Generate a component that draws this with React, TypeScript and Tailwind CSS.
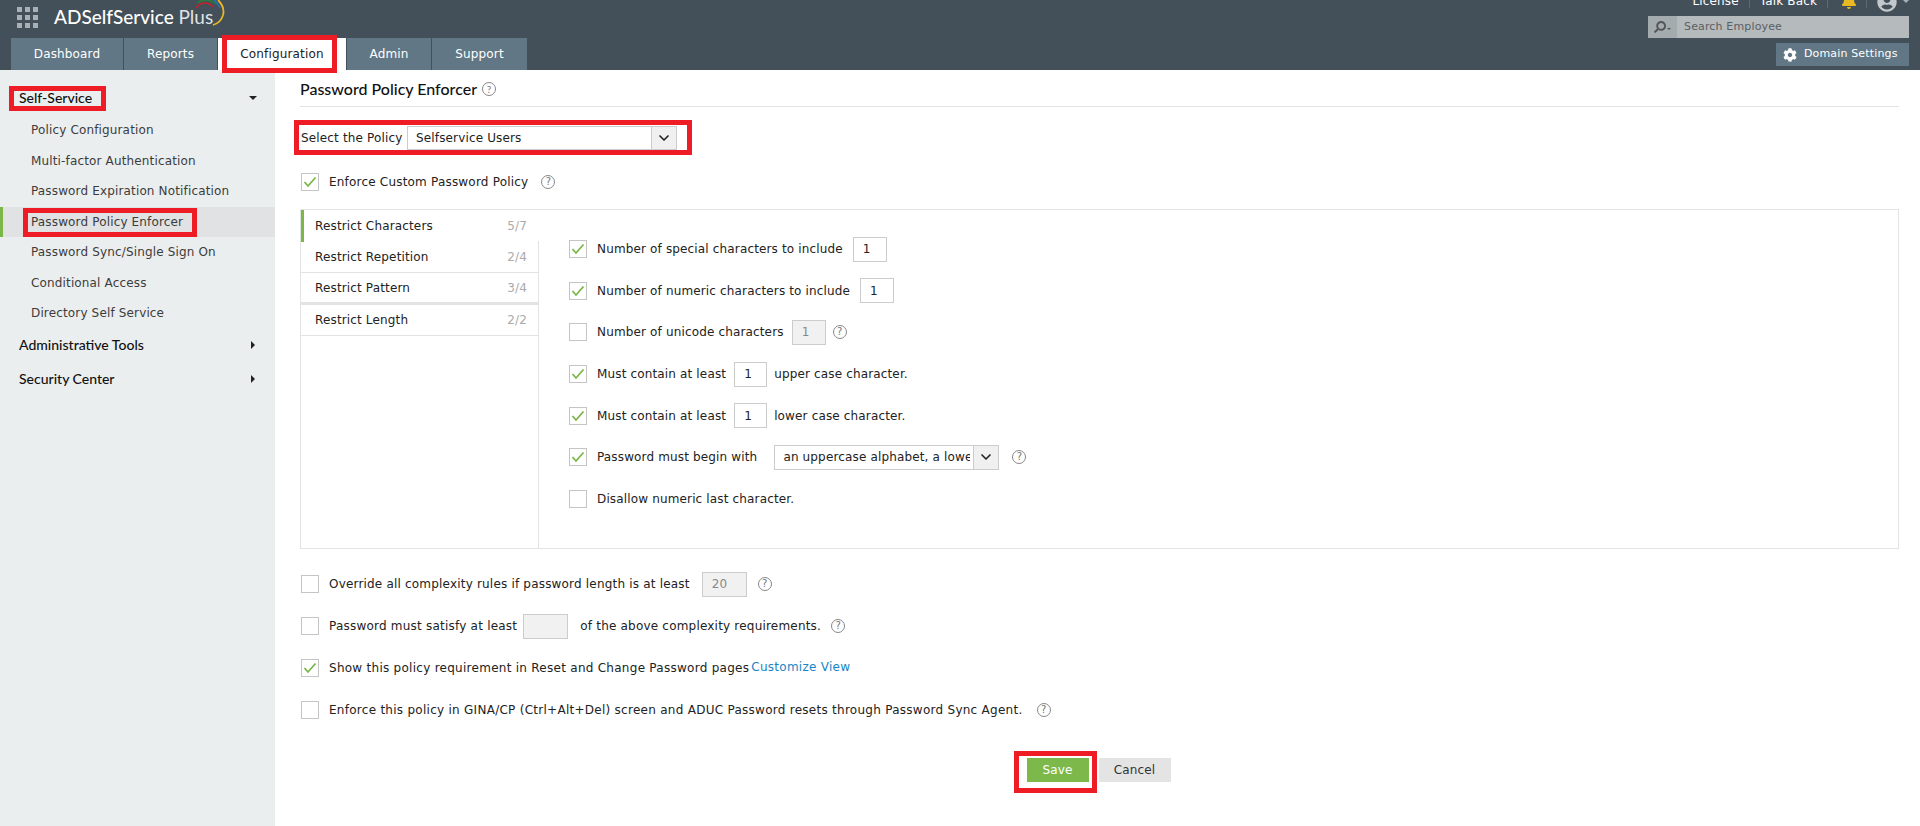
import { ChevronDown } from "lucide-react";
import { FaBell, FaCog, FaSearch, FaUserCircle } from "react-icons/fa";

const verdana = "font-['DejaVu_Sans',sans-serif]";
const lato = "font-['Lato',sans-serif] tracking-normal";

function Help({ className = "" }: { className?: string }) {
  return (
    <span className={`inline-flex h-[14px] w-[14px] shrink-0 items-center justify-center rounded-full border border-[#888] text-[10px] leading-none tracking-normal text-[#777] ${className}`}>?</span>
  );
}

function Check({ on }: { on?: boolean }) {
  return (
    <span className="flex h-[18px] w-[18px] shrink-0 items-center justify-center border border-[#c4c4c4] bg-white">
      {on && (
        <svg width="14" height="12" viewBox="0 0 14 12" fill="none">
          <path d="M1.5 6 L5 10 L12.5 1.5" stroke="#7ab648" strokeWidth="1.8" />
        </svg>
      )}
    </span>
  );
}

function NumBox({ value, w = "w-[34px]", off }: { value: string; w?: string; off?: boolean }) {
  return (
    <span className={`flex h-[25px] items-center border border-[#ccc] pl-[9px] ${w} ${off ? "bg-[#f1f1f1] text-[#888]" : "bg-white"}`}>{value}</span>
  );
}

function Row({ on, h = "h-[41.6px]", children }: { on?: boolean; h?: string; children: React.ReactNode }) {
  return (
    <div className={`flex items-center ${h}`}>
      <Check on={on} />
      <div className="ml-[10px] flex items-center">{children}</div>
    </div>
  );
}

const tabs = ["Dashboard", "Reports", "Configuration", "Admin", "Support"];
const tabWidths = ["w-[112px]", "w-[93px]", "w-[128px]", "w-[84px]", "w-[95px]"];
const subItems = ["Policy Configuration", "Multi-factor Authentication", "Password Expiration Notification", "Password Policy Enforcer", "Password Sync/Single Sign On", "Conditional Access", "Directory Self Service"];
const restricts = [["Restrict Characters", "5/7"], ["Restrict Repetition", "2/4"], ["Restrict Pattern", "3/4"], ["Restrict Length", "2/2"]];

export default function App() {
  return (
    <div className={`h-[826px] w-[1920px] overflow-hidden bg-white text-[12px] tracking-[0.15px] text-[#222] ${verdana}`}>
      {/* header */}
      <header className="relative flex h-[70px] justify-between bg-[#434f59]">
        <div className="flex flex-col pl-[11px]">
          <div className="flex h-[38px] items-start">
            <div className="ml-[6px] mt-[7px] grid grid-cols-3 gap-[3px]">
              {Array.from({ length: 9 }).map((_, i) => (
                <span key={i} className="h-[5px] w-[5px] bg-[#a9b0b5]" />
              ))}
            </div>
            <span className={`ml-[16px] mt-[6px] text-[19px] font-medium leading-[22px] text-white ${lato}`}>ADSelfService <span className="font-normal text-[#dfe3e5]">Plus</span></span>
          </div>
          <svg width="40" height="30" viewBox="0 0 40 30" fill="none" className="absolute left-[190px] top-0">
            <path d="M6 8 C10 2 18 1 23 7" stroke="#c8202f" strokeWidth="1.6" />
            <path d="M7 3 C12 -1 20 -1 27 4" stroke="#2a7a3c" strokeWidth="1.6" />
            <path d="M24 0 C27 2 29 5 30 8" stroke="#2c6bb5" strokeWidth="1.6" />
            <path d="M28 0 C38 10 33 22 23 25" stroke="#e8b923" strokeWidth="1.8" />
          </svg>
          <nav className="flex h-[32px] gap-[1px]">
            {tabs.map((t, i) => (
              <div key={t} className={`relative flex items-center justify-center ${tabWidths[i]} ${t === "Configuration" ? "bg-white text-[#222]" : "bg-[#627785] text-white"}`}>
                {t}
                {t === "Configuration" && <span className="absolute -bottom-[3px] -top-[3px] left-[4px] right-[9px] border-[5px] border-[#ee1c25]" />}
              </div>
            ))}
          </nav>
        </div>
        <div className="flex flex-col items-end pr-[11px]">
          <div className="-mt-[7px] flex h-[16px] items-center text-white">
            <span>License</span>
            <span className="mx-[10px] h-[14px] w-px bg-[#5d6a73]" />
            <span>Talk Back</span>
            <span className="mx-[10px] h-[14px] w-px bg-[#5d6a73]" />
            <span className="relative ml-[3px]">
              <FaBell size={16} color="#e8b923" />
              <span className="absolute -right-[5px] -top-[1px] h-[8px] w-[11px] rounded-full bg-[#e53935]" />
            </span>
            <span className="ml-[9px] mr-[10px] h-[14px] w-px bg-[#5d6a73]" />
            <FaUserCircle size={20} color="#c2c8cc" className="mt-[2px]" />
            <span className="ml-[5px] mr-[-1px] h-0 w-0 border-x-[4px] border-t-[4px] border-x-transparent border-t-[#a9b0b5]" />
          </div>
          <div className="mt-[7px] flex h-[22px] w-[261px] items-center bg-[#b5babd] text-[11px] text-[#5b5f62]">
            <span className="flex h-full w-[29px] items-center justify-center gap-[1px] bg-[#a3abaf]">
              <FaSearch size={12} color="#555" className="-scale-x-100" />
              <span className="mt-[3px] h-0 w-0 border-x-[2px] border-t-[2px] border-x-transparent border-t-[#555]" />
            </span>
            <span className="ml-[7px]">Search Employee</span>
          </div>
          <div className="mt-[5px] flex h-[23px] w-[133px] items-center bg-[#627785] pl-[7px] text-[11px] text-white">
            <FaCog size={14} />
            <span className="ml-[7px]">Domain Settings</span>
          </div>
        </div>
      </header>

      <div className="flex h-[756px]">
        {/* sidebar */}
        <aside className="w-[275px] shrink-0 bg-[#ebeeef] pt-[14px] text-[#3c3c3c]">
          <div className={`relative flex h-[27px] items-center justify-between pl-[19px] pr-[18px] text-[14px] font-medium text-[#111] ${lato}`}>
            Self-Service
            <span className="absolute left-[9px] top-[2px] h-[25px] w-[97px] border-[5px] border-[#ee1c25]" />
            <span className="h-0 w-0 border-x-[4px] border-t-[4px] border-x-transparent border-t-[#222]" />
          </div>
          <ul className="mt-[4px]">
            {subItems.map((s) => {
              const active = s === "Password Policy Enforcer";
              return (
                <li key={s} className={`relative flex h-[30.5px] items-center ${active ? "border-l-[3px] border-[#7ab648] bg-[#e0e2e3] pl-[28px]" : "pl-[31px]"}`}>
                  {s}
                  {active && <span className="absolute bottom-0 left-[20px] top-[1px] w-[174px] border-[5px] border-[#ee1c25]" />}
                </li>
              );
            })}
          </ul>
          <div className="-mt-[1px]">
            {["Administrative Tools", "Security Center"].map((s) => (
              <div key={s} className={`flex h-[34px] items-center justify-between pl-[19px] pr-[20px] text-[14px] font-medium text-[#111] ${lato}`}>
                {s}
                <span className="h-0 w-0 border-y-[4px] border-l-[4px] border-y-transparent border-l-[#222]" />
              </div>
            ))}
          </div>
        </aside>

        {/* content */}
        <main className="flex-1 pl-[25px] pr-[21px]">
          <div className={`flex h-[37px] items-center border-b border-[#e3e3e3] pt-[1px] text-[16px] font-medium text-[#111] ${lato}`}>
            Password Policy Enforcer
            <Help className="ml-[5px] font-normal" />
          </div>

          <div className="relative mt-[18px] flex h-[26px] w-[377px] items-center pl-[1px]">
            <span className="w-[101px] shrink-0 whitespace-nowrap">Select the Policy</span>
            <span className="ml-[5px] flex h-[24px] w-[270px] items-center justify-between border border-[#ccc] pl-[8px]">
              Selfservice Users
              <span className="flex h-full w-[25px] items-center justify-center border-l border-[#ccc] bg-[#f0f0f0]"><ChevronDown size={16} strokeWidth={2.5} /></span>
            </span>
            <span className="absolute -left-[6px] -top-[5px] h-[35px] w-[398px] border-[5px] border-[#ee1c25]" />
          </div>

          <div className="mt-[19px] flex h-[24px] items-center pl-[1px]">
            <Check on />
            <span className="ml-[10px] tracking-[0.2px]">Enforce Custom Password Policy</span>
            <Help className="ml-[13px]" />
          </div>

          {/* restriction panel */}
          <section className="mt-[15px] flex h-[340px] border border-[#e3e3e3]">
            <div className="relative w-[238px] shrink-0">
              <div className="absolute bottom-0 right-0 top-[31px] w-px bg-[#e3e3e3]" />
              {restricts.map(([label, n], i) => (
                <div key={label} className={`flex h-[31.5px] items-center justify-between pr-[12px] ${i === 0 ? "border-l-[3px] border-[#7ab648] pl-[11px]" : "border-b border-[#e3e3e3] pl-[14px]"} ${i === 2 ? "border-b-[3px] pt-[2px]" : ""}`}>
                  <span>{label}</span>
                  <span className="text-[#aaa]">{n}</span>
                </div>
              ))}
            </div>
            <div className="pl-[30px] pt-[18.5px]">
              <Row on><span>Number of special characters to include</span><span className="ml-[10px]"><NumBox value="1" /></span></Row>
              <Row on><span>Number of numeric characters to include</span><span className="ml-[10px]"><NumBox value="1" /></span></Row>
              <Row><span>Number of unicode characters</span><span className="ml-[8px]"><NumBox value="1" off /></span><Help className="ml-[7px]" /></Row>
              <Row on><span>Must contain at least</span><span className="ml-[8px] mr-[7px]"><NumBox value="1" w="w-[33px]" /></span><span>upper case character.</span></Row>
              <Row on><span>Must contain at least</span><span className="ml-[8px] mr-[7px]"><NumBox value="1" w="w-[33px]" /></span><span>lower case character.</span></Row>
              <Row on>
                <span>Password must begin with</span>
                <span className="ml-[17px] flex h-[25px] w-[225px] items-center justify-between border border-[#ccc] pl-[8px]">
                  <span className="w-[187px] overflow-hidden whitespace-nowrap">an uppercase alphabet, a lowercase</span>
                  <span className="flex h-full w-[25px] items-center justify-center border-l border-[#ccc] bg-[#f0f0f0]"><ChevronDown size={16} strokeWidth={2.5} /></span>
                </span>
                <Help className="ml-[13px]" />
              </Row>
              <Row><span>Disallow numeric last character.</span></Row>
            </div>
          </section>

          <div className="mt-[14px] pl-[1px] tracking-[0.27px]">
            <Row h="h-[42px]"><span className="tracking-[0.19px]">Override all complexity rules if password length is at least</span><span className="ml-[12px]"><NumBox value="20" w="w-[45px]" off /></span><Help className="ml-[11px]" /></Row>
            <Row h="h-[42px]"><span className="tracking-[0.22px]">Password must satisfy at least</span><span className="ml-[6px]"><NumBox value="" w="w-[45px]" off /></span><span className="ml-[12px] tracking-[0.2px]">of the above complexity requirements.</span><Help className="ml-[10px]" /></Row>
            <Row on h="h-[42px]"><span>Show this policy requirement in Reset and Change Password pages</span><span className="-mt-[2px] ml-[2px] text-[#1a85c5]">Customize View</span></Row>
            <Row h="h-[42px]"><span>Enforce this policy in GINA/CP (Ctrl+Alt+Del) screen and ADUC Password resets through Password Sync Agent.</span><Help className="ml-[14px]" /></Row>
          </div>

          <div className="mt-[27px] flex justify-center">
            <div className="relative -left-[1px] flex gap-[10px]">
              <button className="h-[24px] w-[62px] bg-[#7db94a] text-white">Save</button>
              <span className="absolute -left-[13px] -top-[7px] h-[42px] w-[83px] border-[5px] border-[#ee1c25]" />
              <button className="h-[24px] w-[72px] bg-[#e4e4e4] text-[#333]">Cancel</button>
            </div>
          </div>
        </main>
      </div>
    </div>
  );
}
